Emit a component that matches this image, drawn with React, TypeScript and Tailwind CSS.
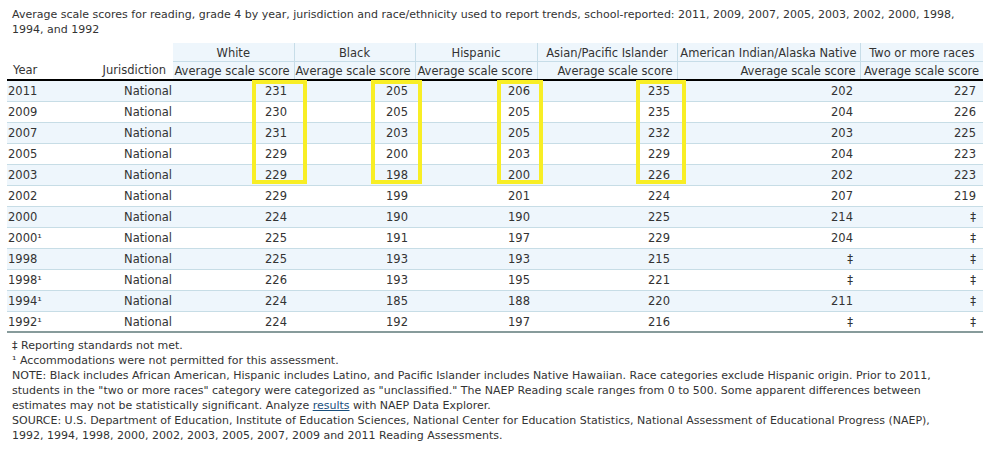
import React from "react";

type Row = { year: string; values: string[] };

const groups = [
  "White",
  "Black",
  "Hispanic",
  "Asian/Pacific Islander",
  "American Indian/Alaska Native",
  "Two or more races",
];

const rows: Row[] = [
  { year: "2011", values: ["231", "205", "206", "235", "202", "227"] },
  { year: "2009", values: ["230", "205", "205", "235", "204", "226"] },
  { year: "2007", values: ["231", "203", "205", "232", "203", "225"] },
  { year: "2005", values: ["229", "200", "203", "229", "204", "223"] },
  { year: "2003", values: ["229", "198", "200", "226", "202", "223"] },
  { year: "2002", values: ["229", "199", "201", "224", "207", "219"] },
  { year: "2000", values: ["224", "190", "190", "225", "214", "‡"] },
  { year: "2000¹", values: ["225", "191", "197", "229", "204", "‡"] },
  { year: "1998", values: ["225", "193", "193", "215", "‡", "‡"] },
  { year: "1998¹", values: ["226", "193", "195", "221", "‡", "‡"] },
  { year: "1994¹", values: ["224", "185", "188", "220", "211", "‡"] },
  { year: "1992¹", values: ["224", "192", "197", "216", "‡", "‡"] },
];

// yellow highlight boxes drawn over the table (annotation layer)
function Highlight({ className }: { className: string }) {
  return <div className={"pointer-events-none absolute border-4 border-[#f8ee25] " + className} />;
}

export default function App() {
  return (
    <div className="relative w-[990px] h-[458px] overflow-hidden bg-white text-[#333333] text-[11px] font-['DejaVu_Sans','Verdana',sans-serif]">
      <div className="pl-3 pt-[7px] leading-[15px] whitespace-nowrap">
        Average scale scores for reading, grade 4 by year, jurisdiction and race/ethnicity used to report trends, school-reported: 2011, 2009, 2007, 2005, 2003, 2002, 2000, 1998,
        <br />
        1994, and 1992
      </div>

      <table className="ml-[7px] mt-[6px] w-[976px] table-fixed border-collapse text-[11.5px]">
        <colgroup>
          <col className="w-[83px]" />
          <col className="w-[83px]" />
          <col className="w-[121px]" />
          <col className="w-[121px]" />
          <col className="w-[122px]" />
          <col className="w-[140px]" />
          <col className="w-[183px]" />
          <col className="w-[123px]" />
        </colgroup>
        <thead>
          <tr className="h-[18px]">
            <th rowSpan={2} className="align-bottom text-left font-normal pl-[6px] p-0 border-b-2 border-b-black">
              Year
            </th>
            <th rowSpan={2} className="align-bottom text-right font-normal pr-[7px] p-0 border-b-2 border-b-black">
              Jurisdiction
            </th>
            {groups.map((g, i) => (
              <th
                key={g}
                className={
                  "bg-[#eef6fc] font-normal text-center whitespace-nowrap p-0 pt-[2px] leading-[16px] border-b border-b-[#c7dde8] " +
                  (i < groups.length - 1 ? "border-r border-r-[#c7dde8]" : "")
                }
              >
                {g}
              </th>
            ))}
          </tr>
          <tr className="h-[18px]">
            {groups.map((g, i) => (
              <th
                key={g}
                className={
                  "bg-[#eef6fc] font-normal text-right whitespace-nowrap p-0 pr-[4px] pt-[1px] leading-[16px] border-b-2 border-b-black " +
                  (i < groups.length - 1 ? "border-r border-r-[#c7dde8]" : "")
                }
              >
                Average scale score
              </th>
            ))}
          </tr>
        </thead>
        <tbody>
          {rows.map((r, i) => (
            <tr
              key={r.year}
              className={
                (i % 2 === 0 ? "bg-[#eef6fc] " : "bg-white ") +
                (i === rows.length - 1 ? "border-b-2 border-b-[#879b9b]" : "border-b border-b-[#c7dde6]")
              }
            >
              <td className="h-[21px] p-0 pt-[2px] pl-[1px] text-left">{r.year}</td>
              <td className="h-[21px] p-0 pt-[2px] pr-[1px] text-right">National</td>
              {r.values.map((v, j) => (
                <td key={j} className="h-[21px] p-0 pt-[2px] pr-[7px] text-right">
                  {v}
                </td>
              ))}
            </tr>
          ))}
        </tbody>
      </table>

      <div className="pl-3 mt-[5px] leading-[15px] whitespace-nowrap">
        <div>‡ Reporting standards not met.</div>
        <div>¹ Accommodations were not permitted for this assessment.</div>
        <div>
          NOTE: Black includes African American, Hispanic includes Latino, and Pacific Islander includes Native Hawaiian. Race categories exclude Hispanic origin. Prior to 2011,
        </div>
        <div>
          students in the "two or more races" category were categorized as "unclassified." The NAEP Reading scale ranges from 0 to 500. Some apparent differences between
        </div>
        <div>
          estimates may not be statistically significant. Analyze{" "}
          <a href="#" className="text-[#1b4f7d] underline">
            results
          </a>{" "}
          with NAEP Data Explorer.
        </div>
        <div>
          SOURCE: U.S. Department of Education, Institute of Education Sciences, National Center for Education Statistics, National Assessment of Educational Progress (NAEP),
        </div>
        <div>1992, 1994, 1998, 2000, 2002, 2003, 2005, 2007, 2009 and 2011 Reading Assessments.</div>
      </div>

      <Highlight className="left-[252px] top-[80px] w-[55px] h-[104px]" />
      <Highlight className="left-[371px] top-[80px] w-[51px] h-[104px]" />
      <Highlight className="left-[497px] top-[80px] w-[46px] h-[104px]" />
      <Highlight className="left-[636px] top-[80px] w-[50px] h-[104px]" />
    </div>
  );
}
